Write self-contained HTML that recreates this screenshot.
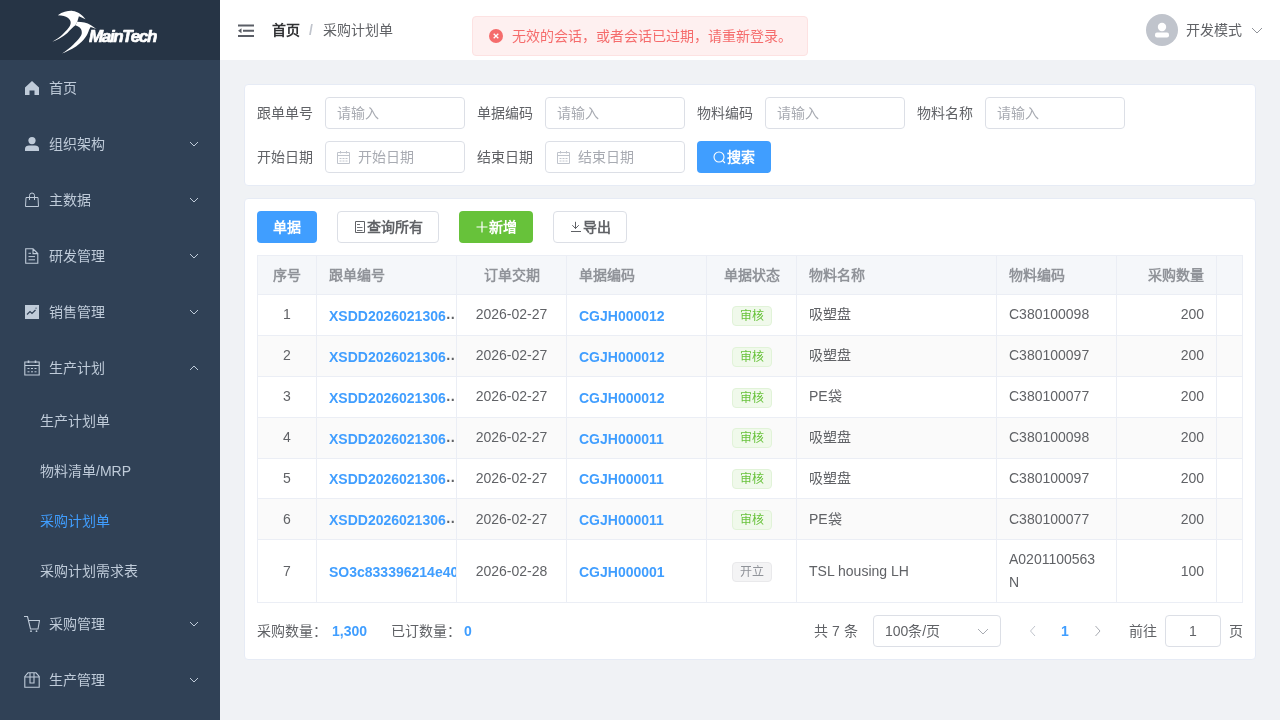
<!DOCTYPE html>
<html lang="zh-CN"><head><meta charset="utf-8">
<style>
*{box-sizing:border-box;margin:0;padding:0}
html,body{width:1280px;height:720px;overflow:hidden}
body{will-change:transform}
body{font-family:"Liberation Sans",sans-serif;font-size:14px;color:#606266;background:#f0f2f5;position:relative}
.abs{position:absolute}
#sidebar{position:absolute;left:0;top:0;width:220px;height:720px;background:#304156}
#logo{position:absolute;left:0;top:0;width:220px;height:60px;background:#263445}
.mi{position:absolute;left:0;width:220px;height:56px;line-height:56px;color:#bfcbd9;font-size:14px}
.mi .t{position:absolute;left:49px;top:0}
.mi svg.ic{position:absolute;left:24px;top:20px;width:16px;height:16px}
.mi svg.ar{position:absolute;left:188px;top:24px;width:12px;height:8px}
.si{position:absolute;left:0;width:220px;height:50px;line-height:50px;color:#bfcbd9}
.si .t{position:absolute;left:40px;top:0}
#navbar{position:absolute;left:220px;top:0;width:1060px;height:60px;background:#fff}
.card{position:absolute;left:244px;width:1012px;background:#fff;border:1px solid #e6ebf5;border-radius:4px}
.lbl{position:absolute;height:32px;line-height:32px;color:#606266}
.inp{position:absolute;width:140px;height:32px;border:1px solid #dcdfe6;border-radius:4px;line-height:30px;color:#a8abb2;padding-left:11px}
.btn{position:absolute;height:32px;border-radius:4px;line-height:32px;font-weight:bold;text-align:center;font-size:14px}
.th,.td{position:absolute;top:0;height:100%;border-right:1px solid #ebeef5}
.row{position:absolute;left:257px;width:986px;border-left:1px solid #ebeef5;border-bottom:1px solid #ebeef5}
.hc{padding:0 12px;line-height:38px;color:#909399;font-weight:bold;white-space:nowrap}
.bc{left:0;right:0;top:-1px;bottom:1px;padding:0 12px;line-height:40px;white-space:nowrap}
.lk{color:#409eff;font-weight:bold;padding:0;top:1px}
.tag{width:40px;height:20px;border:1px solid;border-radius:4px;font-size:12px;line-height:18px;text-align:center}
</style></head><body>
<div id="sidebar">
  <div id="logo">
    <svg class="abs" style="left:0;top:0;will-change:transform" width="220" height="60" viewBox="0 0 220 60">
      <path fill="#fff" d="M57.8,15.2 C63,11.5 68.5,10.6 72.7,10.9 C78,11.4 82.5,14.8 85.5,19.3 L78.9,16.2 L77.3,21.7 L75.4,25.2 C73,27 70,30 67.4,33 C63,37 57,40 52.3,41.7 C56,39.5 60,37 63,34 C67,30 70.5,26.5 70.7,23 C70.9,19 67,15.5 57.8,15.2 Z"/>
      <path fill="#fff" d="M77.3,21.7 C82,21.8 87,22.5 91,25.2 C93,26.5 95,28 96.5,29.1 L90.6,27.1 L89,30 C88,34 85,40 76,46.5 C71,49.5 66,52 62.1,53.4 C66,51 70,48 73.4,44.5 C78,40 81.6,36 81.8,33 C82,29.5 80.5,27 75.4,25.2 Z"/>
      <text x="89" y="42" fill="#fff" stroke="#fff" stroke-width="0.7" stroke-linejoin="round" font-family="Liberation Sans" font-weight="bold" font-style="italic" font-size="17" letter-spacing="-1.35">MainTech</text>
    </svg>
  </div>
  <div class="mi" style="top:60px">
    <svg class="ic" viewBox="0 0 16 16"><path fill="#bfcbd9" d="M8,1 L15,7.5 L15,15 L10.5,15 L10.5,10.5 L5.5,10.5 L5.5,15 L1,15 L1,7.5 Z"/></svg>
    <span class="t">首页</span>
  </div>
  <div class="mi" style="top:116px">
    <svg class="ic" viewBox="0 0 16 16"><circle cx="8" cy="4.6" r="3.6" fill="#bfcbd9"/><path fill="#bfcbd9" d="M1,12.5 C1,10.5 3,9.5 5,9.5 L11,9.5 C13,9.5 15,10.5 15,12.5 L15,15 L1,15 Z"/></svg>
    <span class="t">组织架构</span>
    <svg class="ar" viewBox="0 0 12 8"><path d="M2,2 L6,6 L10,2" fill="none" stroke="#bfcbd9" stroke-width="1"/></svg>
  </div>
  <div class="mi" style="top:172px">
    <svg class="ic" viewBox="0 0 16 16"><path fill="none" stroke="#bfcbd9" stroke-width="1" d="M2,5.5 L14,5.5 L14.5,14.5 L1.5,14.5 Z M5.5,8 L5.5,3.5 A2.5,2.5 0 0 1 10.5,3.5 L10.5,8"/></svg>
    <span class="t">主数据</span>
    <svg class="ar" viewBox="0 0 12 8"><path d="M2,2 L6,6 L10,2" fill="none" stroke="#bfcbd9" stroke-width="1"/></svg>
  </div>
  <div class="mi" style="top:228px">
    <svg class="ic" viewBox="0 0 16 16"><path fill="none" stroke="#bfcbd9" stroke-width="1.1" d="M1.7,0.8 L9,0.8 L13.8,5.6 L13.8,15.2 L1.7,15.2 Z M9,0.8 L9,5.6 L13.8,5.6"/><path stroke="#bfcbd9" stroke-width="1" d="M4.5,5.3 L7,5.3 M4.5,8.6 L11,8.6 M4.5,11.8 L11,11.8"/></svg>
    <span class="t">研发管理</span>
    <svg class="ar" viewBox="0 0 12 8"><path d="M2,2 L6,6 L10,2" fill="none" stroke="#bfcbd9" stroke-width="1"/></svg>
  </div>
  <div class="mi" style="top:284px">
    <svg class="ic" viewBox="0 0 16 16"><rect x="1" y="1" width="14" height="14" fill="#bfcbd9"/><path d="M3,10.5 L6,7.5 L8,9.5 L11.5,6" fill="none" stroke="#304156" stroke-width="1.2"/><path d="M11,4 L12.5,3.5 L12.5,5 Z" fill="#304156"/></svg>
    <span class="t">销售管理</span>
    <svg class="ar" viewBox="0 0 12 8"><path d="M2,2 L6,6 L10,2" fill="none" stroke="#bfcbd9" stroke-width="1"/></svg>
  </div>
  <div class="mi" style="top:340px">
    <svg class="ic" viewBox="0 0 16 16"><path fill="none" stroke="#bfcbd9" stroke-width="1.1" d="M0.8,2 L15.2,2 L15.2,15 L0.8,15 Z M0.8,5.5 L15.2,5.5"/><path stroke="#bfcbd9" stroke-width="1.6" d="M4.5,0.5 L4.5,3 M11.5,0.5 L11.5,3"/><path stroke="#bfcbd9" stroke-width="1" d="M3.5,8.5 h2 M7,8.5 h2 M10.5,8.5 h2 M3.5,11.8 h2 M7,11.8 h2 M10.5,11.8 h2"/></svg>
    <span class="t">生产计划</span>
    <svg class="ar" viewBox="0 0 12 8"><path d="M2,6 L6,2 L10,6" fill="none" stroke="#bfcbd9" stroke-width="1"/></svg>
  </div>
  <div class="si" style="top:396px"><span class="t">生产计划单</span></div>
  <div class="si" style="top:446px"><span class="t">物料清单/MRP</span></div>
  <div class="si" style="top:496px;color:#409eff"><span class="t">采购计划单</span></div>
  <div class="si" style="top:546px"><span class="t">采购计划需求表</span></div>
  <div class="mi" style="top:596px">
    <svg class="ic" viewBox="0 0 16 16"><path fill="none" stroke="#bfcbd9" stroke-width="1.1" d="M0,0.5 L3.5,0.5 L6.5,13 L14,13 L15.5,4.5 L4.5,4.5"/><circle cx="7" cy="15.2" r="0.9" fill="#bfcbd9"/><circle cx="12.5" cy="15.2" r="0.9" fill="#bfcbd9"/></svg>
    <span class="t">采购管理</span>
    <svg class="ar" viewBox="0 0 12 8"><path d="M2,2 L6,6 L10,2" fill="none" stroke="#bfcbd9" stroke-width="1"/></svg>
  </div>
  <div class="mi" style="top:652px">
    <svg class="ic" viewBox="0 0 16 16"><path fill="none" stroke="#bfcbd9" stroke-width="1.1" d="M0.8,4.5 L4,0.8 L12,0.8 L15.2,4.5 L15.2,15.2 L0.8,15.2 Z M0.8,5 L15.2,5 M6,0.8 L6,11 L10,11 L10,0.8"/></svg>
    <span class="t">生产管理</span>
    <svg class="ar" viewBox="0 0 12 8"><path d="M2,2 L6,6 L10,2" fill="none" stroke="#bfcbd9" stroke-width="1"/></svg>
  </div>
</div>
<div id="navbar">
  <svg class="abs" style="left:18px;top:24px" width="16" height="14" viewBox="0 0 16 14"><path fill="#5a5e66" d="M0,0.5 h16 v2 h-16 Z M5,5.8 h11 v2 h-11 Z M0,11 h16 v2 h-16 Z M0,6.8 L3.5,4.3 L3.5,9.3 Z"/></svg>
  <div class="abs" style="left:52px;top:0;height:60px;line-height:60px;font-size:14px">
    <span style="color:#303133;font-weight:bold">首页</span><span style="color:#c0c4cc;margin:0 10px 0 9px;font-weight:bold">/</span><span style="color:#606266">采购计划单</span>
  </div>
  <div class="abs" style="left:926px;top:14px;width:32px;height:32px;border-radius:50%;background:#c0c4cc">
    <svg class="abs" style="left:0;top:0" width="32" height="32" viewBox="0 0 32 32"><circle cx="16" cy="13" r="4.2" fill="#fff"/><rect x="9" y="18.5" width="14" height="5" rx="2" fill="#fff"/></svg>
  </div>
  <div class="abs" style="left:966px;top:0;height:60px;line-height:60px;color:#606266">开发模式</div>
  <svg class="abs" style="left:1030px;top:26px" width="14" height="10" viewBox="0 0 14 10"><path d="M2,2 L7,7 L12,2" fill="none" stroke="#909399" stroke-width="1"/></svg>
</div>
<div class="abs" style="left:472px;top:16px;width:336px;height:40px;background:#fef0f0;border:1px solid #fde2e2;border-radius:4px">
  <svg class="abs" style="left:16px;top:12px" width="14" height="14" viewBox="0 0 14 14"><circle cx="7" cy="7" r="7" fill="#f56c6c"/><path d="M4.7,4.7 L9.3,9.3 M9.3,4.7 L4.7,9.3" stroke="#fff" stroke-width="1.3"/></svg>
  <div class="abs" style="left:39px;top:0;height:38px;line-height:38px;color:#f56c6c;white-space:nowrap">无效的会话，或者会话已过期，请重新登录。</div>
</div>
<div class="card" style="top:84px;height:102px">
  <div class="lbl" style="left:12px;top:12px">跟单单号</div>
  <div class="inp" style="left:80px;top:12px">请输入</div>
  <div class="lbl" style="left:232px;top:12px">单据编码</div>
  <div class="inp" style="left:300px;top:12px">请输入</div>
  <div class="lbl" style="left:452px;top:12px">物料编码</div>
  <div class="inp" style="left:520px;top:12px">请输入</div>
  <div class="lbl" style="left:672px;top:12px">物料名称</div>
  <div class="inp" style="left:740px;top:12px">请输入</div>
  <div class="lbl" style="left:12px;top:56px">开始日期</div>
  <div class="inp" style="left:80px;top:56px;padding-left:32px"><svg class="abs" style="left:11px;top:9px" width="14" height="14" viewBox="0 0 14 14"><path fill="none" stroke="#c0c4cc" stroke-width="1" d="M0.5,1.5 h12 v11 h-12 Z M0.5,4.5 h12"/><path stroke="#c0c4cc" stroke-width="1" d="M3.5,0 v2.5 M9.5,0 v2.5 M2.5,7.5 h2 M5.5,7.5 h2 M8.5,7.5 h2 M2.5,10 h2 M5.5,10 h2 M8.5,10 h2"/></svg>开始日期</div>
  <div class="lbl" style="left:232px;top:56px">结束日期</div>
  <div class="inp" style="left:300px;top:56px;padding-left:32px"><svg class="abs" style="left:11px;top:9px" width="14" height="14" viewBox="0 0 14 14"><path fill="none" stroke="#c0c4cc" stroke-width="1" d="M0.5,1.5 h12 v11 h-12 Z M0.5,4.5 h12"/><path stroke="#c0c4cc" stroke-width="1" d="M3.5,0 v2.5 M9.5,0 v2.5 M2.5,7.5 h2 M5.5,7.5 h2 M8.5,7.5 h2 M2.5,10 h2 M5.5,10 h2 M8.5,10 h2"/></svg>结束日期</div>
  <div class="btn" style="left:452px;top:56px;width:74px;background:#409eff;color:#fff">
    <svg class="abs" style="left:16px;top:10px" width="13" height="13" viewBox="0 0 13 13"><circle cx="6" cy="6" r="5" fill="none" stroke="#fff" stroke-width="1.1"/><path d="M9.6,9.6 L12,12" stroke="#fff" stroke-width="1.1"/></svg>
    <span class="abs" style="left:30px;top:0">搜索</span>
  </div>
</div>
<div class="card" style="top:198px;height:462px"></div>
<!--T-->
<div class="btn" style="left:257px;top:211px;width:60px;background:#409eff;color:#fff">单据</div>
<div class="btn" style="left:337px;top:211px;width:102px;background:#fff;border:1px solid #dcdfe6;color:#606266;line-height:30px">
  <svg class="abs" style="left:16px;top:9px" width="12" height="13" viewBox="0 0 12 13"><path fill="none" stroke="#606266" stroke-width="1" d="M1.5,0.5 h9 v11 h-9 Z"/><path stroke="#606266" stroke-width="0.9" d="M3,3.5 h3 M3,6.5 h5.5 M3,9.5 h5.5"/></svg>
  <span class="abs" style="left:29px;top:0">查询所有</span></div>
<div class="btn" style="left:459px;top:211px;width:74px;background:#67c23a;color:#fff">
  <svg class="abs" style="left:17px;top:10px" width="12" height="12" viewBox="0 0 12 12"><path stroke="#fff" stroke-width="1.2" d="M6,0.5 v11 M0.5,6 h11"/></svg>
  <span class="abs" style="left:30px;top:0">新增</span></div>
<div class="btn" style="left:553px;top:211px;width:74px;background:#fff;border:1px solid #dcdfe6;color:#606266;line-height:30px">
  <svg class="abs" style="left:17px;top:9px" width="12" height="12" viewBox="0 0 12 12"><path fill="none" stroke="#606266" stroke-width="1" d="M4.5,0.8 v7 M1.3,4.2 L4.5,7.5 L7.8,4.2 M0,10.5 h10"/></svg>
  <span class="abs" style="left:29px;top:0">导出</span></div>
<div class="abs" style="left:257px;top:255px;width:986px;height:1px;background:#ebeef5"></div>
<div class="abs" style="left:257px;top:255px;width:1px;height:348px;background:#ebeef5"></div>
<div class="abs" style="left:258px;top:256px;width:985px;height:39px;background:#f5f7fa"><div class="abs" style="left:0px;top:0;width:59px;height:39px;border-right:1px solid #ebeef5;border-bottom:1px solid #ebeef5"><div class="abs hc" style="left:0;right:0;top:0;bottom:0;text-align:center">序号</div></div><div class="abs" style="left:59px;top:0;width:140px;height:39px;border-right:1px solid #ebeef5;border-bottom:1px solid #ebeef5"><div class="abs hc" style="left:0;right:0;top:0;bottom:0;text-align:left">跟单编号</div></div><div class="abs" style="left:199px;top:0;width:110px;height:39px;border-right:1px solid #ebeef5;border-bottom:1px solid #ebeef5"><div class="abs hc" style="left:0;right:0;top:0;bottom:0;text-align:center">订单交期</div></div><div class="abs" style="left:309px;top:0;width:140px;height:39px;border-right:1px solid #ebeef5;border-bottom:1px solid #ebeef5"><div class="abs hc" style="left:0;right:0;top:0;bottom:0;text-align:left">单据编码</div></div><div class="abs" style="left:449px;top:0;width:90px;height:39px;border-right:1px solid #ebeef5;border-bottom:1px solid #ebeef5"><div class="abs hc" style="left:0;right:0;top:0;bottom:0;text-align:center">单据状态</div></div><div class="abs" style="left:539px;top:0;width:200px;height:39px;border-right:1px solid #ebeef5;border-bottom:1px solid #ebeef5"><div class="abs hc" style="left:0;right:0;top:0;bottom:0;text-align:left">物料名称</div></div><div class="abs" style="left:739px;top:0;width:120px;height:39px;border-right:1px solid #ebeef5;border-bottom:1px solid #ebeef5"><div class="abs hc" style="left:0;right:0;top:0;bottom:0;text-align:left">物料编码</div></div><div class="abs" style="left:859px;top:0;width:100px;height:39px;border-right:1px solid #ebeef5;border-bottom:1px solid #ebeef5"><div class="abs hc" style="left:0;right:0;top:0;bottom:0;text-align:right">采购数量</div></div><div class="abs" style="left:959px;top:0;width:26px;height:39px;border-right:1px solid #ebeef5;border-bottom:1px solid #ebeef5"><div class="abs hc" style="left:0;right:0;top:0;bottom:0;text-align:left"></div></div></div>
<div class="abs" style="left:258px;top:295px;width:985px;height:41px;background:#fff"><div class="abs" style="left:0px;top:0;width:59px;height:41px;border-right:1px solid #ebeef5;border-bottom:1px solid #ebeef5"><div class="abs bc" style="text-align:center;line-height:40px">1</div></div><div class="abs" style="left:59px;top:0;width:140px;height:41px;border-right:1px solid #ebeef5;border-bottom:1px solid #ebeef5"><div class="abs bc lk" style="left:12px;right:0;overflow:hidden;white-space:nowrap;line-height:40px">XSDD2026021306<span style="color:#606266;font-weight:bold;position:relative;top:-2px">&hellip;</span></div></div><div class="abs" style="left:199px;top:0;width:110px;height:41px;border-right:1px solid #ebeef5;border-bottom:1px solid #ebeef5"><div class="abs bc" style="text-align:center;line-height:40px">2026-02-27</div></div><div class="abs" style="left:309px;top:0;width:140px;height:41px;border-right:1px solid #ebeef5;border-bottom:1px solid #ebeef5"><div class="abs bc lk" style="left:12px;line-height:40px">CGJH000012</div></div><div class="abs" style="left:449px;top:0;width:90px;height:41px;border-right:1px solid #ebeef5;border-bottom:1px solid #ebeef5"><div class="abs tag" style="left:25px;top:11px;background:#f0f9eb;border-color:#e1f3d8;color:#67c23a">审核</div></div><div class="abs" style="left:539px;top:0;width:200px;height:41px;border-right:1px solid #ebeef5;border-bottom:1px solid #ebeef5"><div class="abs bc" style="line-height:40px">吸塑盘</div></div><div class="abs" style="left:739px;top:0;width:120px;height:41px;border-right:1px solid #ebeef5;border-bottom:1px solid #ebeef5"><div class="abs bc" style="line-height:40px">C380100098</div></div><div class="abs" style="left:859px;top:0;width:100px;height:41px;border-right:1px solid #ebeef5;border-bottom:1px solid #ebeef5"><div class="abs bc" style="text-align:right;line-height:40px">200</div></div><div class="abs" style="left:959px;top:0;width:26px;height:41px;border-right:1px solid #ebeef5;border-bottom:1px solid #ebeef5"></div></div>
<div class="abs" style="left:258px;top:336px;width:985px;height:41px;background:#fafafa"><div class="abs" style="left:0px;top:0;width:59px;height:41px;border-right:1px solid #ebeef5;border-bottom:1px solid #ebeef5"><div class="abs bc" style="text-align:center;line-height:40px">2</div></div><div class="abs" style="left:59px;top:0;width:140px;height:41px;border-right:1px solid #ebeef5;border-bottom:1px solid #ebeef5"><div class="abs bc lk" style="left:12px;right:0;overflow:hidden;white-space:nowrap;line-height:40px">XSDD2026021306<span style="color:#606266;font-weight:bold;position:relative;top:-2px">&hellip;</span></div></div><div class="abs" style="left:199px;top:0;width:110px;height:41px;border-right:1px solid #ebeef5;border-bottom:1px solid #ebeef5"><div class="abs bc" style="text-align:center;line-height:40px">2026-02-27</div></div><div class="abs" style="left:309px;top:0;width:140px;height:41px;border-right:1px solid #ebeef5;border-bottom:1px solid #ebeef5"><div class="abs bc lk" style="left:12px;line-height:40px">CGJH000012</div></div><div class="abs" style="left:449px;top:0;width:90px;height:41px;border-right:1px solid #ebeef5;border-bottom:1px solid #ebeef5"><div class="abs tag" style="left:25px;top:11px;background:#f0f9eb;border-color:#e1f3d8;color:#67c23a">审核</div></div><div class="abs" style="left:539px;top:0;width:200px;height:41px;border-right:1px solid #ebeef5;border-bottom:1px solid #ebeef5"><div class="abs bc" style="line-height:40px">吸塑盘</div></div><div class="abs" style="left:739px;top:0;width:120px;height:41px;border-right:1px solid #ebeef5;border-bottom:1px solid #ebeef5"><div class="abs bc" style="line-height:40px">C380100097</div></div><div class="abs" style="left:859px;top:0;width:100px;height:41px;border-right:1px solid #ebeef5;border-bottom:1px solid #ebeef5"><div class="abs bc" style="text-align:right;line-height:40px">200</div></div><div class="abs" style="left:959px;top:0;width:26px;height:41px;border-right:1px solid #ebeef5;border-bottom:1px solid #ebeef5"></div></div>
<div class="abs" style="left:258px;top:377px;width:985px;height:41px;background:#fff"><div class="abs" style="left:0px;top:0;width:59px;height:41px;border-right:1px solid #ebeef5;border-bottom:1px solid #ebeef5"><div class="abs bc" style="text-align:center;line-height:40px">3</div></div><div class="abs" style="left:59px;top:0;width:140px;height:41px;border-right:1px solid #ebeef5;border-bottom:1px solid #ebeef5"><div class="abs bc lk" style="left:12px;right:0;overflow:hidden;white-space:nowrap;line-height:40px">XSDD2026021306<span style="color:#606266;font-weight:bold;position:relative;top:-2px">&hellip;</span></div></div><div class="abs" style="left:199px;top:0;width:110px;height:41px;border-right:1px solid #ebeef5;border-bottom:1px solid #ebeef5"><div class="abs bc" style="text-align:center;line-height:40px">2026-02-27</div></div><div class="abs" style="left:309px;top:0;width:140px;height:41px;border-right:1px solid #ebeef5;border-bottom:1px solid #ebeef5"><div class="abs bc lk" style="left:12px;line-height:40px">CGJH000012</div></div><div class="abs" style="left:449px;top:0;width:90px;height:41px;border-right:1px solid #ebeef5;border-bottom:1px solid #ebeef5"><div class="abs tag" style="left:25px;top:11px;background:#f0f9eb;border-color:#e1f3d8;color:#67c23a">审核</div></div><div class="abs" style="left:539px;top:0;width:200px;height:41px;border-right:1px solid #ebeef5;border-bottom:1px solid #ebeef5"><div class="abs bc" style="line-height:40px">PE袋</div></div><div class="abs" style="left:739px;top:0;width:120px;height:41px;border-right:1px solid #ebeef5;border-bottom:1px solid #ebeef5"><div class="abs bc" style="line-height:40px">C380100077</div></div><div class="abs" style="left:859px;top:0;width:100px;height:41px;border-right:1px solid #ebeef5;border-bottom:1px solid #ebeef5"><div class="abs bc" style="text-align:right;line-height:40px">200</div></div><div class="abs" style="left:959px;top:0;width:26px;height:41px;border-right:1px solid #ebeef5;border-bottom:1px solid #ebeef5"></div></div>
<div class="abs" style="left:258px;top:418px;width:985px;height:41px;background:#fafafa"><div class="abs" style="left:0px;top:0;width:59px;height:41px;border-right:1px solid #ebeef5;border-bottom:1px solid #ebeef5"><div class="abs bc" style="text-align:center;line-height:40px">4</div></div><div class="abs" style="left:59px;top:0;width:140px;height:41px;border-right:1px solid #ebeef5;border-bottom:1px solid #ebeef5"><div class="abs bc lk" style="left:12px;right:0;overflow:hidden;white-space:nowrap;line-height:40px">XSDD2026021306<span style="color:#606266;font-weight:bold;position:relative;top:-2px">&hellip;</span></div></div><div class="abs" style="left:199px;top:0;width:110px;height:41px;border-right:1px solid #ebeef5;border-bottom:1px solid #ebeef5"><div class="abs bc" style="text-align:center;line-height:40px">2026-02-27</div></div><div class="abs" style="left:309px;top:0;width:140px;height:41px;border-right:1px solid #ebeef5;border-bottom:1px solid #ebeef5"><div class="abs bc lk" style="left:12px;line-height:40px">CGJH000011</div></div><div class="abs" style="left:449px;top:0;width:90px;height:41px;border-right:1px solid #ebeef5;border-bottom:1px solid #ebeef5"><div class="abs tag" style="left:25px;top:10px;background:#f0f9eb;border-color:#e1f3d8;color:#67c23a">审核</div></div><div class="abs" style="left:539px;top:0;width:200px;height:41px;border-right:1px solid #ebeef5;border-bottom:1px solid #ebeef5"><div class="abs bc" style="line-height:40px">吸塑盘</div></div><div class="abs" style="left:739px;top:0;width:120px;height:41px;border-right:1px solid #ebeef5;border-bottom:1px solid #ebeef5"><div class="abs bc" style="line-height:40px">C380100098</div></div><div class="abs" style="left:859px;top:0;width:100px;height:41px;border-right:1px solid #ebeef5;border-bottom:1px solid #ebeef5"><div class="abs bc" style="text-align:right;line-height:40px">200</div></div><div class="abs" style="left:959px;top:0;width:26px;height:41px;border-right:1px solid #ebeef5;border-bottom:1px solid #ebeef5"></div></div>
<div class="abs" style="left:258px;top:459px;width:985px;height:40px;background:#fff"><div class="abs" style="left:0px;top:0;width:59px;height:40px;border-right:1px solid #ebeef5;border-bottom:1px solid #ebeef5"><div class="abs bc" style="top:0;bottom:0;text-align:center;line-height:39px">5</div></div><div class="abs" style="left:59px;top:0;width:140px;height:40px;border-right:1px solid #ebeef5;border-bottom:1px solid #ebeef5"><div class="abs bc lk" style="left:12px;right:0;overflow:hidden;white-space:nowrap;line-height:39px">XSDD2026021306<span style="color:#606266;font-weight:bold;position:relative;top:-2px">&hellip;</span></div></div><div class="abs" style="left:199px;top:0;width:110px;height:40px;border-right:1px solid #ebeef5;border-bottom:1px solid #ebeef5"><div class="abs bc" style="top:0;bottom:0;text-align:center;line-height:39px">2026-02-27</div></div><div class="abs" style="left:309px;top:0;width:140px;height:40px;border-right:1px solid #ebeef5;border-bottom:1px solid #ebeef5"><div class="abs bc lk" style="left:12px;line-height:39px">CGJH000011</div></div><div class="abs" style="left:449px;top:0;width:90px;height:40px;border-right:1px solid #ebeef5;border-bottom:1px solid #ebeef5"><div class="abs tag" style="left:25px;top:10px;background:#f0f9eb;border-color:#e1f3d8;color:#67c23a">审核</div></div><div class="abs" style="left:539px;top:0;width:200px;height:40px;border-right:1px solid #ebeef5;border-bottom:1px solid #ebeef5"><div class="abs bc" style="top:0;bottom:0;line-height:39px">吸塑盘</div></div><div class="abs" style="left:739px;top:0;width:120px;height:40px;border-right:1px solid #ebeef5;border-bottom:1px solid #ebeef5"><div class="abs bc" style="top:0;bottom:0;line-height:39px">C380100097</div></div><div class="abs" style="left:859px;top:0;width:100px;height:40px;border-right:1px solid #ebeef5;border-bottom:1px solid #ebeef5"><div class="abs bc" style="top:0;bottom:0;text-align:right;line-height:39px">200</div></div><div class="abs" style="left:959px;top:0;width:26px;height:40px;border-right:1px solid #ebeef5;border-bottom:1px solid #ebeef5"></div></div>
<div class="abs" style="left:258px;top:499px;width:985px;height:41px;background:#fafafa"><div class="abs" style="left:0px;top:0;width:59px;height:41px;border-right:1px solid #ebeef5;border-bottom:1px solid #ebeef5"><div class="abs bc" style="top:0;bottom:0;text-align:center;line-height:40px">6</div></div><div class="abs" style="left:59px;top:0;width:140px;height:41px;border-right:1px solid #ebeef5;border-bottom:1px solid #ebeef5"><div class="abs bc lk" style="left:12px;right:0;overflow:hidden;white-space:nowrap;line-height:40px">XSDD2026021306<span style="color:#606266;font-weight:bold;position:relative;top:-2px">&hellip;</span></div></div><div class="abs" style="left:199px;top:0;width:110px;height:41px;border-right:1px solid #ebeef5;border-bottom:1px solid #ebeef5"><div class="abs bc" style="top:0;bottom:0;text-align:center;line-height:40px">2026-02-27</div></div><div class="abs" style="left:309px;top:0;width:140px;height:41px;border-right:1px solid #ebeef5;border-bottom:1px solid #ebeef5"><div class="abs bc lk" style="left:12px;line-height:40px">CGJH000011</div></div><div class="abs" style="left:449px;top:0;width:90px;height:41px;border-right:1px solid #ebeef5;border-bottom:1px solid #ebeef5"><div class="abs tag" style="left:25px;top:11px;background:#f0f9eb;border-color:#e1f3d8;color:#67c23a">审核</div></div><div class="abs" style="left:539px;top:0;width:200px;height:41px;border-right:1px solid #ebeef5;border-bottom:1px solid #ebeef5"><div class="abs bc" style="top:0;bottom:0;line-height:40px">PE袋</div></div><div class="abs" style="left:739px;top:0;width:120px;height:41px;border-right:1px solid #ebeef5;border-bottom:1px solid #ebeef5"><div class="abs bc" style="top:0;bottom:0;line-height:40px">C380100077</div></div><div class="abs" style="left:859px;top:0;width:100px;height:41px;border-right:1px solid #ebeef5;border-bottom:1px solid #ebeef5"><div class="abs bc" style="top:0;bottom:0;text-align:right;line-height:40px">200</div></div><div class="abs" style="left:959px;top:0;width:26px;height:41px;border-right:1px solid #ebeef5;border-bottom:1px solid #ebeef5"></div></div>
<div class="abs" style="left:258px;top:540px;width:985px;height:63px;background:#fff"><div class="abs" style="left:0px;top:0;width:59px;height:63px;border-right:1px solid #ebeef5;border-bottom:1px solid #ebeef5"><div class="abs bc" style="top:0;bottom:0;text-align:center;line-height:62px">7</div></div><div class="abs" style="left:59px;top:0;width:140px;height:63px;border-right:1px solid #ebeef5;border-bottom:1px solid #ebeef5"><div class="abs bc lk" style="top:1px;left:12px;right:0;overflow:hidden;white-space:nowrap;line-height:62px">SO3c833396214e40a</div></div><div class="abs" style="left:199px;top:0;width:110px;height:63px;border-right:1px solid #ebeef5;border-bottom:1px solid #ebeef5"><div class="abs bc" style="top:0;bottom:0;text-align:center;line-height:62px">2026-02-28</div></div><div class="abs" style="left:309px;top:0;width:140px;height:63px;border-right:1px solid #ebeef5;border-bottom:1px solid #ebeef5"><div class="abs bc lk" style="top:1px;left:12px;line-height:62px">CGJH000001</div></div><div class="abs" style="left:449px;top:0;width:90px;height:63px;border-right:1px solid #ebeef5;border-bottom:1px solid #ebeef5"><div class="abs tag" style="left:25px;top:22px;background:#f4f4f5;border-color:#e9e9eb;color:#909399">开立</div></div><div class="abs" style="left:539px;top:0;width:200px;height:63px;border-right:1px solid #ebeef5;border-bottom:1px solid #ebeef5"><div class="abs bc" style="top:0;bottom:0;line-height:62px">TSL housing LH</div></div><div class="abs" style="left:739px;top:0;width:120px;height:63px;border-right:1px solid #ebeef5;border-bottom:1px solid #ebeef5"><div class="abs" style="left:12px;top:8px;line-height:23px">A0201100563<br>N</div></div><div class="abs" style="left:859px;top:0;width:100px;height:63px;border-right:1px solid #ebeef5;border-bottom:1px solid #ebeef5"><div class="abs bc" style="top:0;bottom:0;text-align:right;line-height:62px">100</div></div><div class="abs" style="left:959px;top:0;width:26px;height:63px;border-right:1px solid #ebeef5;border-bottom:1px solid #ebeef5"></div></div>
<div class="abs" style="left:257px;top:615px;height:32px;line-height:32px;white-space:nowrap">采购数量：<b style="color:#409eff;margin-left:5px">1,300</b></div>
<div class="abs" style="left:391px;top:615px;height:32px;line-height:32px;white-space:nowrap">已订数量：<b style="color:#409eff;margin-left:3px">0</b></div>
<div class="abs" style="left:814px;top:615px;height:32px;line-height:32px;white-space:nowrap">共 7 条</div>
<div class="abs" style="left:873px;top:615px;width:128px;height:32px;border:1px solid #dcdfe6;border-radius:4px;line-height:30px;padding-left:11px;color:#606266">100条/页
  <svg class="abs" style="left:102px;top:11px" width="14" height="10" viewBox="0 0 14 10"><path d="M2,2 L7,7 L12,2" fill="none" stroke="#a8abb2" stroke-width="1"/></svg></div>
<svg class="abs" style="left:1027px;top:624px" width="12" height="14" viewBox="0 0 12 14"><path d="M8,2 L3.5,7 L8,12" fill="none" stroke="#c0c4cc" stroke-width="1"/></svg>
<div class="abs" style="left:1050px;top:615px;width:30px;height:32px;line-height:32px;text-align:center;color:#409eff;font-weight:bold">1</div>
<svg class="abs" style="left:1092px;top:624px" width="12" height="14" viewBox="0 0 12 14"><path d="M3.5,2 L8,7 L3.5,12" fill="none" stroke="#a8abb2" stroke-width="1"/></svg>
<div class="abs" style="left:1129px;top:615px;height:32px;line-height:32px">前往</div>
<div class="abs" style="left:1165px;top:615px;width:56px;height:32px;border:1px solid #dcdfe6;border-radius:4px;line-height:30px;text-align:center;color:#606266">1</div>
<div class="abs" style="left:1229px;top:615px;height:32px;line-height:32px">页</div>
<!--/T-->
</body></html>
